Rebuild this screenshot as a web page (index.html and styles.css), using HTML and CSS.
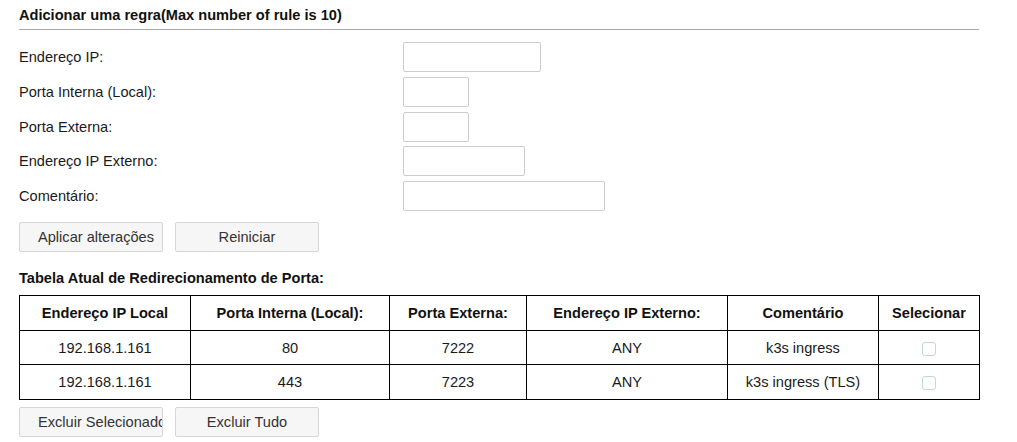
FILE: index.html
```html
<!DOCTYPE html>
<html>
<head>
<meta charset="utf-8">
<link rel="stylesheet" href="styles.css">
</head>
<body>
<div class="page">
  <div class="section-title">Adicionar uma regra(Max number of rule is 10)</div>
  <div class="form">
    <div class="row"><label class="lbl">Endereço IP:</label><input class="inp w138" type="text"></div>
    <div class="row"><label class="lbl">Porta Interna (Local):</label><input class="inp w66" type="text"></div>
    <div class="row"><label class="lbl">Porta Externa:</label><input class="inp w66" type="text"></div>
    <div class="row"><label class="lbl">Endereço IP Externo:</label><input class="inp w122" type="text"></div>
    <div class="row"><label class="lbl">Comentário:</label><input class="inp w202" type="text"></div>
  </div>
  <div class="buttons">
    <button class="btn">Aplicar alterações</button>
    <button class="btn">Reiniciar</button>
  </div>
  <div class="table-title">Tabela Atual de Redirecionamento de Porta:</div>
  <table class="rules">
    <colgroup>
      <col class="c1"><col class="c2"><col class="c3"><col class="c4"><col class="c5"><col class="c6">
    </colgroup>
    <tr>
      <th>Endereço IP Local</th>
      <th>Porta Interna (Local):</th>
      <th>Porta Externa:</th>
      <th>Endereço IP Externo:</th>
      <th>Comentário</th>
      <th>Selecionar</th>
    </tr>
    <tr>
      <td>192.168.1.161</td><td>80</td><td>7222</td><td>ANY</td><td>k3s ingress</td><td><span class="chk"></span></td>
    </tr>
    <tr>
      <td>192.168.1.161</td><td>443</td><td>7223</td><td>ANY</td><td>k3s ingress (TLS)</td><td><span class="chk"></span></td>
    </tr>
  </table>
  <div class="buttons bottom">
    <button class="btn">Excluir Selecionado</button>
    <button class="btn">Excluir Tudo</button>
  </div>
</div>
</body>
</html>
```
FILE: styles.css
```css
html, body {
  margin: 0;
  padding: 0;
  background: #fff;
}
body {
  font-family: "Liberation Sans", Arial, sans-serif;
  font-size: 14.6px;
  color: #1a1a1a;
}
.page {
  width: 960px;
  padding-left: 19px;
  display: flex;
  flex-direction: column;
}
.section-title {
  font-weight: bold;
  color: #111;
  line-height: 18px;
  padding-top: 6px;
  padding-bottom: 5px;
  border-bottom: 1px solid #aaa;
}
.form {
  display: flex;
  flex-direction: column;
  gap: 4.75px;
  margin-top: 12px;
}
.row {
  display: flex;
  align-items: center;
  height: 30px;
}
.lbl {
  width: 384px;
  color: #1a1a1a;
}
.inp {
  box-sizing: border-box;
  height: 30px;
  border: 1px solid #ccc;
  border-radius: 2px;
  background: #fff;
  margin: 0;
  padding: 0 4px;
  font: inherit;
}
.w138 { width: 138px; }
.w66 { width: 66px; }
.w122 { width: 122px; }
.w202 { width: 202px; }
.buttons {
  display: flex;
  gap: 12px;
  margin-top: 11px;
}
.buttons.bottom {
  margin-top: 7px;
}
.btn {
  box-sizing: border-box;
  width: 144px;
  height: 30px;
  margin: 0;
  padding: 0 18px;
  border: 1px solid #d6d6d6;
  border-radius: 2px;
  background: #f6f6f6;
  color: #333;
  font: inherit;
  white-space: nowrap;
  overflow: hidden;
  text-align: center;
}
.table-title {
  font-weight: bold;
  color: #111;
  line-height: 18px;
  margin-top: 17px;
  margin-bottom: 8px;
}
.rules {
  border-collapse: collapse;
  width: 960px;
  table-layout: fixed;
}
.c1 { width: 171px; }
.c2 { width: 199px; }
.c3 { width: 137px; }
.c4 { width: 201px; }
.c5 { width: 151px; }
.c6 { width: 101px; }
.rules th, .rules td {
  border: 1px solid #000;
  text-align: center;
  height: 33.7px;
  padding: 0;
  color: #1a1a1a;
}
.rules th {
  font-weight: bold;
  color: #111;
}
.chk {
  display: inline-block;
  box-sizing: border-box;
  width: 14px;
  height: 14px;
  border: 1px solid #bfd8d8;
  border-radius: 3px;
  background: #fff;
  vertical-align: middle;
}
```
